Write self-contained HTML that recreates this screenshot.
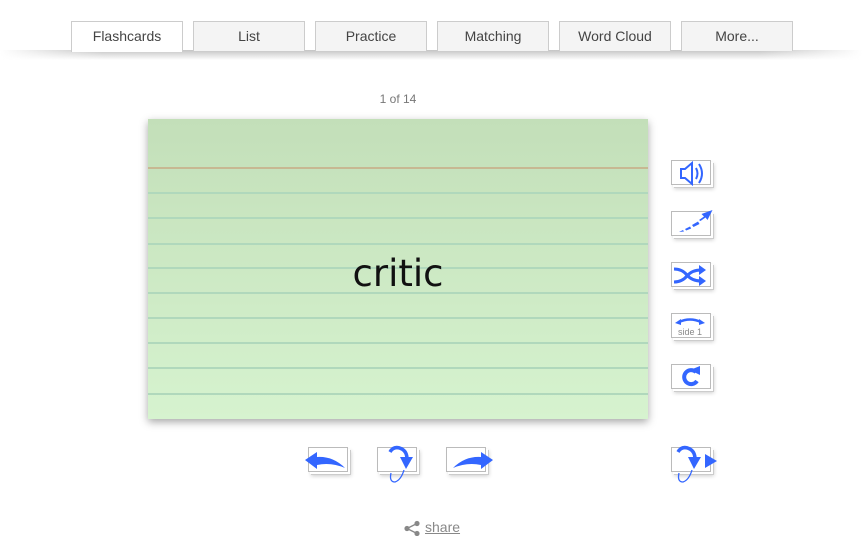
<!DOCTYPE html>
<html><head><meta charset="utf-8"><style>
*{margin:0;padding:0;box-sizing:border-box}
body{width:862px;height:545px;background:#fff;position:relative;overflow:hidden;font-family:"Liberation Sans",sans-serif}
.band{position:absolute;left:0;top:50px;width:862px;height:10px;background:linear-gradient(rgba(190,190,190,.9),rgba(255,255,255,0));-webkit-mask:linear-gradient(90deg,transparent,#000 12%,#000 88%,transparent);}
.tab{position:absolute;top:21px;width:112px;height:30px;border:1px solid #ccc;border-bottom:none;background:#f4f4f4;color:#444;font-size:14px;text-align:center;line-height:28px;z-index:2}
.tab.act{background:#fff;height:31px}
.cnt{position:absolute;left:0;width:796px;text-align:center;top:92px;font-size:12px;color:#777}
.card{position:absolute;left:148px;top:119px;width:500px;height:300px;background:linear-gradient(#c3dfb9,#d6f3cf);box-shadow:0 3px 8px rgba(0,0,0,.35)}
.ln{position:absolute;left:0;width:500px;height:2px;background:#b0d8bc}
.word{position:absolute;left:0;width:500px;top:133px;text-align:center;font-size:37px;font-family:"DejaVu Sans",sans-serif;color:#111}
.btn{position:absolute;width:40px;height:25px;background:#fff;border:1px solid #bbb;box-shadow:2px 2px 0 #fff,3px 3px 0 #ccc,3px 4px 4px rgba(0,0,0,.2)}
.btn svg{position:absolute;left:-8px;top:-8px;overflow:visible}
.share{position:absolute;left:425px;top:519px;font-size:14px;color:#888;text-decoration:underline}
</style></head><body>
<div class="band"></div>
<div class="tab act" style="left:71px">Flashcards</div>
<div class="tab" style="left:193px">List</div>
<div class="tab" style="left:315px">Practice</div>
<div class="tab" style="left:437px">Matching</div>
<div class="tab" style="left:559px">Word Cloud</div>
<div class="tab" style="left:681px">More...</div>
<div class="cnt">1 of 14</div>
<div class="card">
<div class="ln" style="top:48px;background:#c7b892"></div>
<div class="ln" style="top:73px"></div><div class="ln" style="top:98px"></div><div class="ln" style="top:124px"></div><div class="ln" style="top:148px"></div><div class="ln" style="top:173px"></div><div class="ln" style="top:198px"></div><div class="ln" style="top:223px"></div><div class="ln" style="top:248px"></div><div class="ln" style="top:274px"></div>
<div class="word">critic</div>
</div>
<div class="btn" style="left:671px;top:160px"><svg width="56" height="41"><g fill="none" stroke="#3366ff" stroke-width="2"><path d="M17 16h4l7-6v21l-7-6h-4z"/><path d="M32 15q3 5.5 0 11"/><path d="M35 11q6 9.5 0 19"/></g></svg></div>
<div class="btn" style="left:671px;top:211px"><svg width="56" height="41"><g fill="#3366ff"><path d="M15 28l4-2 1 1.5z"/><path d="M21 25l5-2.5 1.2 2-5 2z"/><path d="M28 21l6-3.5 1.5 2.5-6 3z"/><path d="M35 16l5-3.5-2.5-2.5 11-4-5 10-2-2.5-5 3.5z"/></g></svg></div>
<div class="btn" style="left:671px;top:262px"><svg width="56" height="41"><g fill="none" stroke="#3366ff" stroke-width="3"><path d="M10 14q8 0 13 6t14 6"/><path d="M10 27q8 0 13-6t14-6"/></g><g fill="#3366ff"><path d="M35 10l7 5-7 5z"/><path d="M35 21l7 5-7 5z"/></g></svg></div>
<div class="btn" style="left:671px;top:313px"><svg width="56" height="41"><path d="M15 16q11-5 22 0" fill="none" stroke="#3366ff" stroke-width="2.5"/><path d="M11 17l6-4 0 6z M41 17l-6-4 0 6z" fill="#3366ff"/><text x="26" y="29" font-size="9" fill="#888" text-anchor="middle" font-family="Liberation Sans,sans-serif">side 1</text></svg></div>
<div class="btn" style="left:671px;top:364px"><svg width="56" height="41"><path d="M32 15a7 7 0 1 0 1 9" fill="none" stroke="#3366ff" stroke-width="4"/><path d="M26 13l10-4 0 9z" fill="#3366ff"/></svg></div>
<div class="btn" style="left:308px;top:447px"><svg width="56" height="41"><path d="M4 20l12-8 0 5q16-1 28 11q-14-6-28-3l0 4z" fill="#3366ff"/></svg></div>
<div class="btn" style="left:377px;top:447px"><svg width="56" height="41"><path d="M20 12q4-7 12-3 5 3 5 10" fill="none" stroke="#3366ff" stroke-width="3.5"/><path d="M30 17h13l-7 12z" fill="#3366ff"/><path d="M34 30q-3 10-9 12q-6 0-4-9" fill="none" stroke="#3366ff" stroke-width="1.3"/></svg></div>
<div class="btn" style="left:446px;top:447px"><svg width="56" height="41"><path d="M54 20l-12-8 0 5q-16-1-28 11q14-6 28-3l0 4z" fill="#3366ff"/></svg></div>
<div class="btn" style="left:671px;top:447px"><svg width="56" height="41"><path d="M14 12q4-7 12-3 5 3 5 10" fill="none" stroke="#3366ff" stroke-width="3.5"/><path d="M24 17h13l-7 12z" fill="#3366ff"/><path d="M28 30q-3 10-9 12q-6 0-4-9" fill="none" stroke="#3366ff" stroke-width="1.3"/><path d="M41 14l12 7-12 7z" fill="#3366ff"/></svg></div>
<svg style="position:absolute;left:403px;top:520px" width="18" height="16"><g fill="#888"><circle cx="14" cy="3.5" r="2.6"/><circle cx="4" cy="8.5" r="2.6"/><circle cx="14" cy="13.5" r="2.6"/></g><path d="M14 3.5L4 8.5L14 13.5" stroke="#888" stroke-width="1.4" fill="none"/></svg>
<div class="share">share</div>
</body></html>
